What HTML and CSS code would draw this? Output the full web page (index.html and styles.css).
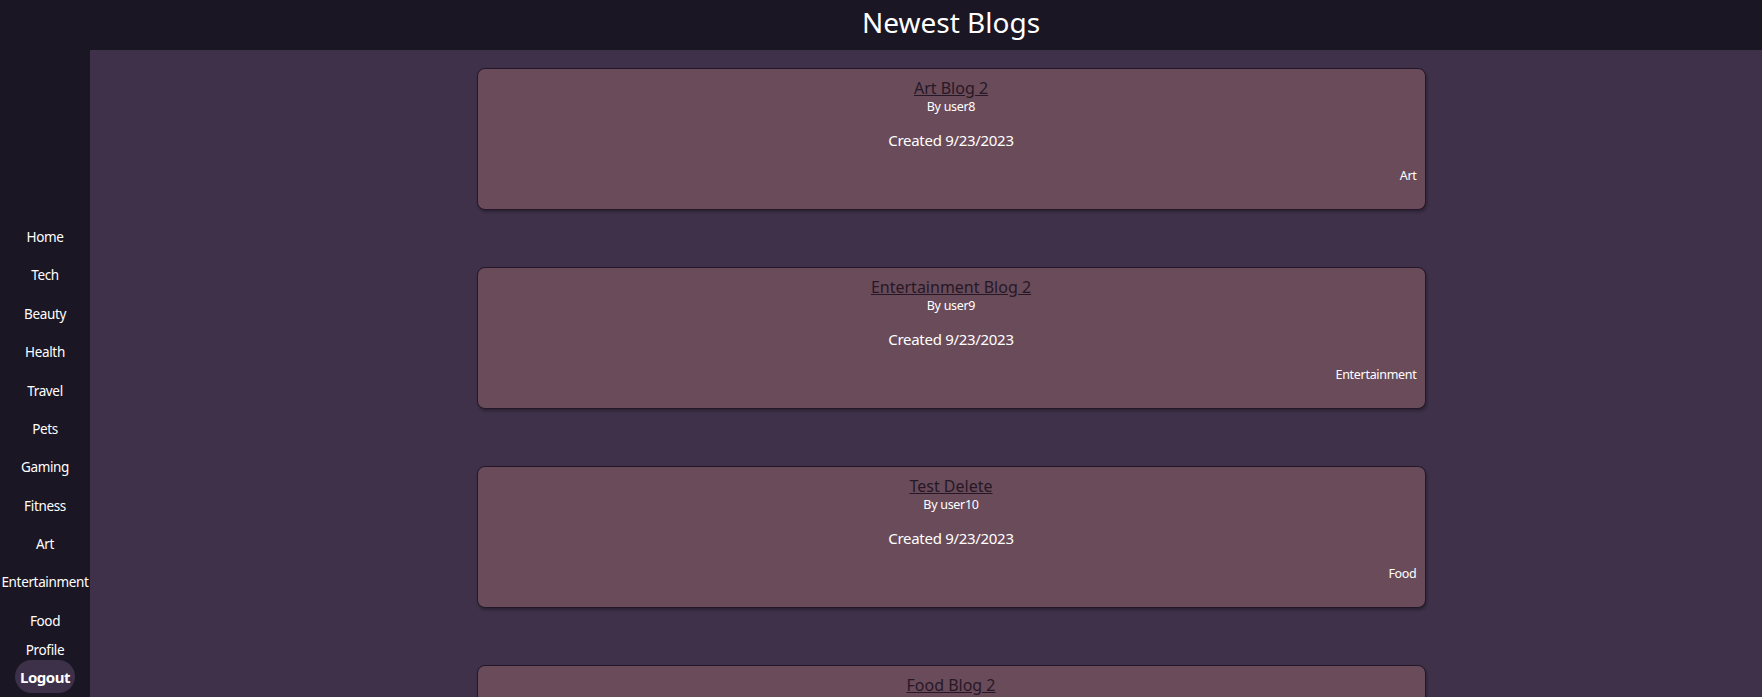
FILE: index.html
```html
<!DOCTYPE html>
<html lang="en">
<head>
<meta charset="utf-8">
<title>Newest Blogs</title>
<link rel="stylesheet" href="styles.css">
</head>
<body>
<header class="topbar">
  <h1 class="page-title">Newest Blogs</h1>
</header>
<div class="layout">
  <nav class="sidebar">
    <a class="nav-link" href="#">Home</a>
    <a class="nav-link" href="#">Tech</a>
    <a class="nav-link" href="#">Beauty</a>
    <a class="nav-link" href="#">Health</a>
    <a class="nav-link" href="#">Travel</a>
    <a class="nav-link" href="#">Pets</a>
    <a class="nav-link" href="#">Gaming</a>
    <a class="nav-link" href="#">Fitness</a>
    <a class="nav-link" href="#">Art</a>
    <a class="nav-link" href="#">Entertainment</a>
    <a class="nav-link" href="#">Food</a>
    <a class="nav-link profile" href="#">Profile</a>
    <button class="logout">Logout</button>
  </nav>
  <main class="feed">
    <article class="card">
      <a class="card-title" href="#">Art Blog 2</a>
      <div class="card-author">By user8</div>
      <div class="card-date">Created 9/23/2023</div>
      <div class="card-cat">Art</div>
    </article>
    <article class="card">
      <a class="card-title" href="#">Entertainment Blog 2</a>
      <div class="card-author">By user9</div>
      <div class="card-date">Created 9/23/2023</div>
      <div class="card-cat">Entertainment</div>
    </article>
    <article class="card">
      <a class="card-title" href="#">Test Delete</a>
      <div class="card-author">By user10</div>
      <div class="card-date">Created 9/23/2023</div>
      <div class="card-cat">Food</div>
    </article>
    <article class="card">
      <a class="card-title" href="#">Food Blog 2</a>
      <div class="card-author">By user7</div>
      <div class="card-date">Created 9/23/2023</div>
      <div class="card-cat">Food</div>
    </article>
  </main>
</div>
</body>
</html>
```
FILE: styles.css
```css
* { box-sizing: border-box; }
html, body { margin: 0; height: 100%; }
body {
  background: #1b1623;
  color: #ffffff;
  font-family: "Noto Sans", "Open Sans", sans-serif;
  overflow: hidden;
}
.topbar {
  height: 50px;
  padding-left: 140px;
  text-align: center;
}
.page-title {
  margin: 0;
  font-size: 28px;
  font-weight: 400;
  line-height: 45px;
  color: #ffffff;
}
.layout {
  display: flex;
  height: calc(100vh - 50px);
}
.sidebar {
  width: 90px;
  flex: 0 0 90px;
  display: flex;
  flex-direction: column;
  justify-content: flex-end;
  align-items: center;
  padding-bottom: 4px;
}
.nav-link {
  display: block;
  color: #ffffff;
  text-decoration: none;
  font-size: 13.5px;
  line-height: 20px;
  padding: 9.2px 0;
  white-space: nowrap;
  letter-spacing: -0.35px;
}
.nav-link.profile { padding: 0; }
.logout {
  width: 60px;
  height: 33px;
  border: none;
  border-radius: 17px;
  background: #3d3049;
  color: #ffffff;
  font-family: inherit;
  font-weight: 700;
  font-size: 15px;
  letter-spacing: -0.5px;
  padding: 0;
}
.feed {
  flex: 1;
  background: #3e3149;
  padding: 18px 0 0 50px;
  display: flex;
  flex-direction: column;
  align-items: center;
  gap: 57px;
  overflow: hidden;
}
.card {
  flex: 0 0 auto;
  width: 949px;
  background: #6a4b5a;
  border: 1px solid #24172a;
  border-radius: 8px;
  box-shadow: 1px 2px 3px rgba(0, 0, 0, 0.3);
  padding: 8px 8px 24px;
  display: flex;
  flex-direction: column;
  align-items: center;
}
.card-title {
  color: #261826;
  font-size: 16px;
  line-height: 22px;
  text-decoration: underline;
}
.card-author {
  margin-top: -1px;
  font-size: 12.5px;
  line-height: 18px;
  letter-spacing: -0.3px;
}
.card-date {
  margin-top: 13px;
  font-size: 15px;
  line-height: 22px;
  letter-spacing: -0.3px;
}
.card-cat {
  margin-top: 16px;
  align-self: flex-end;
  font-size: 12.5px;
  line-height: 18px;
  letter-spacing: -0.3px;
}
```
